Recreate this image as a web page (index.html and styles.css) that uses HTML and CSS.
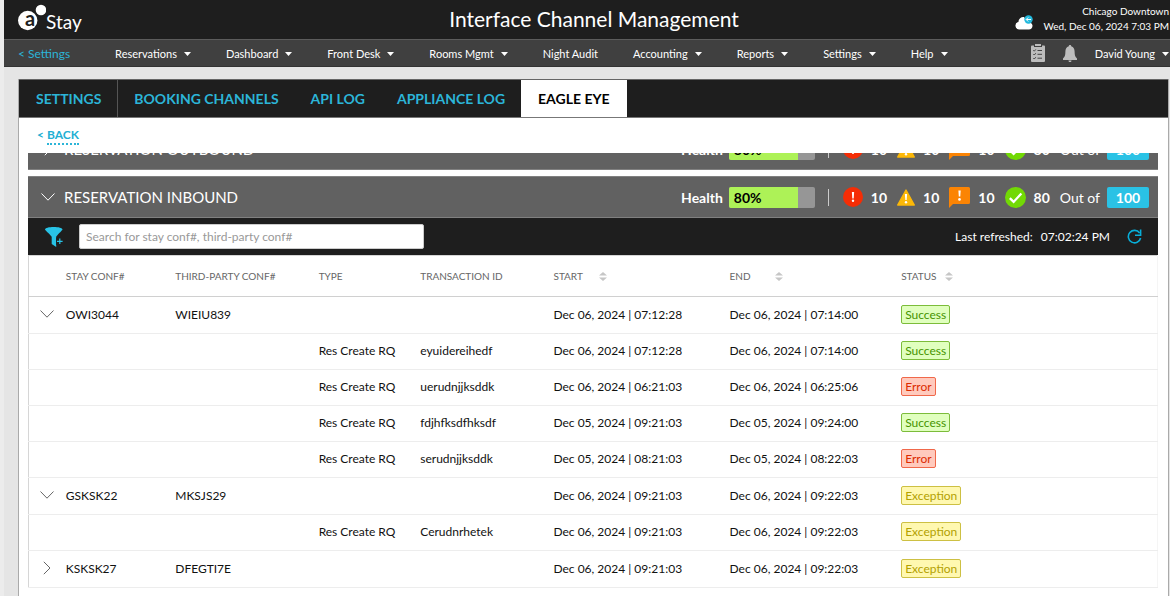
FILE: index.html
```html
<!DOCTYPE html>
<html lang="en">
<head>
  <meta charset="UTF-8">
  <meta name="viewport" content="width=device-width, initial-scale=1.0">
  <title>Interface Channel Management</title>
  <link rel="stylesheet" href="styles.css">
</head>
<body>
  <!-- Shared icons -->
  <svg class="sprite" aria-hidden="true">
    <symbol id="caret" viewBox="0 0 7 4"><path d="M0 0h7L3.500 4z" fill="currentColor"/></symbol>
    <symbol id="chevron-down" viewBox="0 0 14 8"><path d="M.5.500 7 7.200 13.500.500" fill="none" stroke="currentColor"/></symbol>
    <symbol id="chevron-right" viewBox="0 0 8 14"><path d="M.8.800 7 7 .8 13.200" fill="none" stroke="currentColor"/></symbol>
    <symbol id="sort" viewBox="0 0 8 9"><path d="M4 0 8 3.600H0zM0 5.400h8L4 9z" fill="#c6c6c6"/></symbol>
    <symbol id="error" viewBox="0 0 20 20"><circle cx="10" cy="10" r="10" fill="#f52d05"/><path d="M8.900 5h2.200l-.4 6.500H9.300z" fill="#fff"/><circle cx="10" cy="13.700" r="1.200" fill="#fff"/></symbol>
    <symbol id="warning" viewBox="0 0 18 17"><path d="M9 1 17.300 16H.7z" fill="#fcb808" stroke="#fcb808" stroke-width="1.400" stroke-linejoin="round"/><path d="M7.900 5h2.200l-.4 6H8.300z" fill="#fff"/><circle cx="9" cy="13.200" r="1.200" fill="#fff"/></symbol>
    <symbol id="exception" viewBox="0 0 21 21"><path d="M1.500 0h18A1.500 1.500 0 0 1 21 1.500v14a1.500 1.500 0 0 1-1.500 1.500H4l-4 4V1.500A1.500 1.500 0 0 1 1.500 0z" fill="#fb8404"/><path d="M9.400 3.400h2.300l-.4 6.200H9.800z" fill="#fff"/><circle cx="10.500" cy="12.400" r="1.300" fill="#fff"/></symbol>
    <symbol id="success" viewBox="0 0 20 20"><circle cx="10" cy="10" r="10" fill="#72d905"/><path d="m4.600 10.600 3.600 3.600 7.400-8" fill="none" stroke="#fff" stroke-width="2.200"/></symbol>
  </svg>

  <div class="app">
    <header class="header">
      <a class="logo" href="#" aria-label="Stay home">
        <svg class="logo-mark" width="28" height="28" viewBox="0 0 28 28">
          <circle cx="9.700" cy="16.500" r="9.700" fill="#fff"/>
          <circle cx="23" cy="6" r="6.600" fill="#1e1e1e"/>
          <text x="7" y="22" class="logo-letter">a</text>
          <circle cx="23" cy="6" r="5.300" fill="#fff"/>
        </svg>
        <span>Stay</span>
      </a>
      <h1 class="title">Interface Channel Management</h1>
      <div class="property">
        <svg width="18" height="15" viewBox="0 0 18 15" aria-hidden="true">
          <path d="M4 14.500a3.800 3.800 0 0 1-.6-7.500A5 5 0 0 1 9 2l4 6a3.200 3.200 0 0 1 4.500 2.500c.1 2.500-1.500 4-3.500 4z" fill="#fff"/>
          <circle cx="13.500" cy="4.500" r="4.200" fill="#22b9dd"/>
          <path d="M16 4.500h-4.600M13.200 2.500l-2 2 2 2" fill="none" stroke="#fff"/>
        </svg>
        <div class="property-text">
          <div>Chicago Downtown</div>
          <div>Wed, Dec 06, 2024 7:03 PM</div>
        </div>
      </div>
    </header>

    <nav class="nav">
      <a class="nav-back" href="#">&lt; Settings</a>
      <div class="nav-menu">
        <button class="nav-item">Reservations <svg class="caret"><use href="#caret"/></svg></button>
        <button class="nav-item">Dashboard <svg class="caret"><use href="#caret"/></svg></button>
        <button class="nav-item">Front Desk <svg class="caret"><use href="#caret"/></svg></button>
        <button class="nav-item">Rooms Mgmt <svg class="caret"><use href="#caret"/></svg></button>
        <button class="nav-item">Night Audit</button>
        <button class="nav-item">Accounting <svg class="caret"><use href="#caret"/></svg></button>
        <button class="nav-item">Reports <svg class="caret"><use href="#caret"/></svg></button>
        <button class="nav-item">Settings <svg class="caret"><use href="#caret"/></svg></button>
        <button class="nav-item">Help <svg class="caret"><use href="#caret"/></svg></button>
      </div>
      <div class="nav-user">
        <button aria-label="Tasks">
          <svg width="14" height="18" viewBox="0 0 14 18">
            <path d="M1 1.500h2V3h8V1.500h2a1 1 0 0 1 1 1V17a1 1 0 0 1-1 1H1a1 1 0 0 1-1-1V2.500a1 1 0 0 1 1-1zM4 0h6v2H4z" fill="#bdbdbd"/>
            <path d="m2.300 6.200 1 1 1.500-1.800M2.300 10l1 1 1.500-1.800M2.300 14l1 1 1.500-1.800M6.500 6.500H11M6.500 10.300H11M6.500 14.200H11" fill="none" stroke="#444"/>
          </svg>
        </button>
        <button aria-label="Notifications">
          <svg width="14" height="17" viewBox="0 0 14 17">
            <path d="M7 0c.8 0 1.200.5 1.200 1.300C10.600 2 11.600 4 11.600 6.500c0 4 .7 5.500 2.400 7V15H0v-1.500c1.700-1.500 2.400-3 2.400-7C2.400 4 3.400 2 5.800 1.300 5.800.500 6.200 0 7 0zM5.500 15.500h3C8.500 16.500 7.800 17 7 17s-1.500-.5-1.500-1.500z" fill="#bdbdbd"/>
          </svg>
        </button>
        <button class="nav-item">David Young <svg class="caret"><use href="#caret"/></svg></button>
      </div>
    </nav>

    <main class="panel">
      <div class="tabs">
        <a class="tab tab-first" href="#">SETTINGS</a>
        <a class="tab" href="#">BOOKING CHANNELS</a>
        <a class="tab" href="#">API LOG</a>
        <a class="tab" href="#">APPLIANCE LOG</a>
        <a class="tab active" href="#">EAGLE EYE</a>
      </div>

      <div class="back-row"><a class="back" href="#">&lt; <span>BACK</span></a></div>

      <div class="content">
        <!-- Scrolled partly under the back row -->
        <div class="scrolled">
          <section class="section-bar">
            <button class="toggle" aria-label="Expand reservation outbound"><svg width="8" height="14"><use href="#chevron-right"/></svg></button>
            <h2>RESERVATION OUTBOUND</h2>
            <div class="stats">
              <span class="health-label">Health</span>
              <div class="health"><div class="health-fill" style="width: 80%">80%</div></div>
              <span class="divider"></span>
              <span class="stat"><svg width="20" height="20"><use href="#error"/></svg>10</span>
              <span class="stat"><svg width="18" height="17"><use href="#warning"/></svg>10</span>
              <span class="stat"><svg width="21" height="21"><use href="#exception"/></svg>10</span>
              <span class="stat"><svg width="21" height="21"><use href="#success"/></svg>80</span>
              <span class="out-of">Out of</span>
              <span class="total">100</span>
            </div>
          </section>
        </div>

        <section class="section-bar">
          <button class="toggle" aria-label="Collapse reservation inbound"><svg width="14" height="8"><use href="#chevron-down"/></svg></button>
          <h2>RESERVATION INBOUND</h2>
          <div class="stats">
            <span class="health-label">Health</span>
            <div class="health"><div class="health-fill" style="width: 80%">80%</div></div>
            <span class="divider"></span>
            <span class="stat"><svg width="20" height="20"><use href="#error"/></svg>10</span>
            <span class="stat"><svg width="18" height="17"><use href="#warning"/></svg>10</span>
            <span class="stat"><svg width="21" height="21"><use href="#exception"/></svg>10</span>
            <span class="stat"><svg width="21" height="21"><use href="#success"/></svg>80</span>
            <span class="out-of">Out of</span>
            <span class="total">100</span>
          </div>
        </section>

        <div class="toolbar">
          <button class="filter" aria-label="Add filter">
            <svg width="18" height="20" viewBox="0 0 18 20">
              <path d="M0 2.500C0 .9 4 0 8.700 0s8.800.9 8.800 2.500c0 .8-6.300 6.200-6.300 7.500v10L6.700 17v-7C6.700 8.700 0 3.300 0 2.500z" fill="#28c3e6"/>
              <path d="M11.200 10.500H18V18h-6.800z" fill="#1e1e1e"/>
              <path d="M14.800 11.500v5.600M12 14.300h5.600" stroke="#28c3e6" stroke-width="1.200"/>
            </svg>
          </button>
          <input class="search" type="text" aria-label="Search reservations" placeholder="Search for stay conf#, third-party conf#">
          <div class="refreshed">
            <span>Last refreshed:</span>
            <span>07:02:24 PM</span>
            <button class="refresh" aria-label="Refresh">
              <svg width="15" height="15" viewBox="0 0 15 15">
                <path d="M12.600 4A6.200 6.200 0 1 0 13.600 9" fill="none" stroke="#08aed8" stroke-width="1.600"/>
                <path d="M13.600.500v5.700H8" fill="none" stroke="#08aed8" stroke-width="1.600"/>
              </svg>
            </button>
          </div>
        </div>

        <table class="log">
          <colgroup>
            <col class="col-toggle">
            <col class="col-stay">
            <col class="col-third">
            <col class="col-type">
            <col class="col-transaction">
            <col class="col-start">
            <col class="col-end">
            <col>
          </colgroup>
          <thead>
            <tr>
              <th></th>
              <th>STAY CONF#</th>
              <th>THIRD-PARTY CONF#</th>
              <th>TYPE</th>
              <th>TRANSACTION ID</th>
              <th><button class="sort">START <svg width="8" height="9"><use href="#sort"/></svg></button></th>
              <th><button class="sort sort-end">END <svg width="8" height="9"><use href="#sort"/></svg></button></th>
              <th><button class="sort sort-status">STATUS <svg width="8" height="9"><use href="#sort"/></svg></button></th>
            </tr>
          </thead>
          <tbody>
            <tr class="parent">
              <td><button class="toggle" aria-label="Collapse OWI3044"><svg width="14" height="8"><use href="#chevron-down"/></svg></button></td>
              <td>OWI3044</td><td>WIEIU839</td><td></td><td></td>
              <td>Dec 06, 2024 | 07:12:28</td><td>Dec 06, 2024 | 07:14:00</td>
              <td><span class="badge success">Success</span></td>
            </tr>
            <tr>
              <td></td><td></td><td></td><td>Res Create RQ</td><td>eyuidereihedf</td>
              <td>Dec 06, 2024 | 07:12:28</td><td>Dec 06, 2024 | 07:14:00</td>
              <td><span class="badge success">Success</span></td>
            </tr>
            <tr>
              <td></td><td></td><td></td><td>Res Create RQ</td><td>uerudnjjksddk</td>
              <td>Dec 06, 2024 | 06:21:03</td><td>Dec 06, 2024 | 06:25:06</td>
              <td><span class="badge error">Error</span></td>
            </tr>
            <tr>
              <td></td><td></td><td></td><td>Res Create RQ</td><td>fdjhfksdfhksdf</td>
              <td>Dec 05, 2024 | 09:21:03</td><td>Dec 05, 2024 | 09:24:00</td>
              <td><span class="badge success">Success</span></td>
            </tr>
            <tr>
              <td></td><td></td><td></td><td>Res Create RQ</td><td>serudnjjksddk</td>
              <td>Dec 05, 2024 | 08:21:03</td><td>Dec 05, 2024 | 08:22:03</td>
              <td><span class="badge error">Error</span></td>
            </tr>
            <tr class="parent">
              <td><button class="toggle" aria-label="Collapse GSKSK22"><svg width="14" height="8"><use href="#chevron-down"/></svg></button></td>
              <td>GSKSK22</td><td>MKSJS29</td><td></td><td></td>
              <td>Dec 06, 2024 | 09:21:03</td><td>Dec 06, 2024 | 09:22:03</td>
              <td><span class="badge exception">Exception</span></td>
            </tr>
            <tr>
              <td></td><td></td><td></td><td>Res Create RQ</td><td>Cerudnrhetek</td>
              <td>Dec 06, 2024 | 09:21:03</td><td>Dec 06, 2024 | 09:22:03</td>
              <td><span class="badge exception">Exception</span></td>
            </tr>
            <tr class="parent">
              <td><button class="toggle" aria-label="Expand KSKSK27"><svg width="8" height="14"><use href="#chevron-right"/></svg></button></td>
              <td>KSKSK27</td><td>DFEGTI7E</td><td></td><td></td>
              <td>Dec 06, 2024 | 09:21:03</td><td>Dec 06, 2024 | 09:22:03</td>
              <td><span class="badge exception">Exception</span></td>
            </tr>
          </tbody>
        </table>
      </div>
    </main>
  </div>
</body>
</html>
```

FILE: styles.css
```css
* {
  box-sizing: border-box;
}
body {
  margin: 0;
  font-family: Lato, "Liberation Sans", sans-serif;
  font-size: 12px;
  color: #111;
  background-color: #e5e5e5;
  overflow-x: hidden;
}
a {
  color: inherit;
  text-decoration: none;
}
button {
  padding: 0;
  border: 0;
  background: none;
  color: inherit;
  font: inherit;
  cursor: pointer;
}
svg {
  display: block;
  flex: none;
}
.sprite {
  display: none;
}
.app {
  min-height: 100vh;
  display: flex;
  flex-direction: column;
  border-left: 4px solid #ececec;
}

/* Header */
.header {
  display: grid;
  grid-template-columns: 1fr auto 1fr;
  align-items: center;
  height: 39px;
  padding: 0 0 2px 14px;
  background-color: #1e1e1e;
  color: #fff;
}
.logo {
  display: flex;
  align-items: center;
  font-size: 19px;
}
.logo span {
  padding-top: 6px;
}
.logo-mark {
  margin-top: -1px;
}
.logo-letter {
  font-size: 20px;
  font-weight: 700;
  fill: #1e1e1e;
}
.title {
  margin: 0;
  font-size: 21px;
  font-weight: 400;
}
.property {
  display: flex;
  align-items: center;
  justify-content: flex-end;
  gap: 10px;
  padding-right: 1px;
}
.property svg {
  margin-top: 8px;
}
.property-text {
  font-size: 10px;
  line-height: 15px;
  text-align: right;
}

/* Navigation */
.nav {
  display: flex;
  align-items: center;
  height: 28px;
  padding-left: 14px;
  border-top: 1px solid #5c5c5c;
  border-bottom: 1px solid #333;
  background-color: #404040;
  color: #fff;
  font-size: 11px;
}
.nav-back {
  margin-right: 45px;
  color: #2cb5d8;
  font-size: 12px;
}
.nav-menu {
  display: flex;
  gap: 35px;
}
.nav-item {
  display: flex;
  align-items: center;
  gap: 7px;
  white-space: nowrap;
}
.caret {
  width: 7px;
  height: 4px;
  margin-top: 2px;
}
.nav-user {
  display: flex;
  align-items: center;
  gap: 18px;
  margin-left: auto;
  padding-right: 1px;
}

/* Panel and tabs */
.panel {
  flex: 1;
  margin: 12px 1px 0 14px;
  border-left: 1px solid #aaa;
  border-right: 1px solid #aaa;
  background-color: #fff;
}
.tabs {
  display: flex;
  height: 39px;
  padding-left: 1px;
  border-top: 1px solid #666;
  border-bottom: 1px solid #777;
  background-color: #1e1e1e;
}
.tab {
  display: flex;
  align-items: center;
  padding: 0 16px;
  font-size: 14px;
  font-weight: 700;
  color: #2cb5d8;
}
.tab-first {
  border-right: 1px solid #555;
}
.tab.active {
  padding: 0 17px;
  background-color: #fff;
  color: #000;
}
.back-row {
  height: 35px;
  padding: 9px 18px 0;
}
.back {
  color: #22afd3;
  font-weight: 700;
}
.back span {
  display: inline-block;
  line-height: 16px;
  border-bottom: 2px dotted #2cb5d8;
}
.content {
  margin: 0 10px 0 9px;
}

/* Section bars */
.scrolled {
  display: flex;
  align-items: flex-end;
  height: 17px;
  margin-bottom: 6px;
  overflow: hidden;
}
.scrolled .section-bar {
  flex: 1;
}
.section-bar {
  display: flex;
  align-items: center;
  height: 42px;
  padding: 0 9px 0 10px;
  border: 1px solid #808080;
  border-width: 1px 0;
  background-color: #616161;
  color: #fff;
}
.toggle {
  display: flex;
  align-items: center;
  justify-content: center;
  width: 20px;
  height: 20px;
}
.section-bar h2 {
  margin: 0 auto 0 6px;
  font-size: 15px;
  font-weight: 400;
}
.stats {
  display: flex;
  align-items: center;
  font-size: 14px;
  font-weight: 700;
}
.health {
  width: 86px;
  margin: 0 13px 0 6px;
  border-radius: 2px;
  background-color: #969696;
  overflow: hidden;
}
.health-fill {
  padding-left: 5px;
  line-height: 21px;
  background-color: #adf257;
  color: #000;
}
.divider {
  width: 1px;
  height: 17px;
  margin-right: 14px;
  background-color: #ccc;
}
.stat {
  display: flex;
  align-items: center;
  gap: 8px;
  margin-right: 10px;
}
.out-of {
  margin-right: 7px;
  font-weight: 400;
}
.total {
  width: 42px;
  border-radius: 2px;
  background-color: #2ac2e5;
  line-height: 21px;
  text-align: center;
}

/* Search toolbar */
.toolbar {
  display: flex;
  align-items: center;
  height: 37px;
  padding: 0 16px 0 17px;
  background-color: #1e1e1e;
  color: #fff;
}
.search {
  width: 345px;
  height: 25px;
  margin-left: 16px;
  padding: 0 6px;
  border: 1px solid #ccc;
  border-radius: 2px;
  background-color: #fff;
  font: inherit;
}
.search::placeholder {
  color: #999;
}
.refreshed {
  display: flex;
  align-items: center;
  gap: 8px;
  margin-left: auto;
}
.refresh {
  margin-left: 9px;
}

/* Log table */
.log {
  width: 100%;
  table-layout: fixed;
  border-collapse: collapse;
  border: 1px solid #d6d6d6;
  border-right-color: #f5f5f5;
}
.col-toggle { width: 3.3%; }
.col-stay { width: 9.7%; }
.col-third { width: 12.7%; }
.col-type { width: 9%; }
.col-transaction { width: 11.8%; }
.col-start { width: 15.6%; }
.col-end { width: 15.2%; }
.log th {
  height: 41px;
  padding: 0;
  border-bottom: 1px solid #d0d0d0;
  color: #666;
  font-size: 10px;
  font-weight: 400;
  text-align: left;
}
.log td {
  height: 36px;
  padding: 0 0 2px;
  border-bottom: 1px solid #ededed;
  white-space: nowrap;
}
.log .parent td {
  height: 37px;
}
.log .toggle {
  margin-left: 8px;
  color: #666;
}
.sort {
  display: flex;
  align-items: center;
  gap: 16px;
}
.sort-end {
  gap: 24px;
}
.sort-status {
  gap: 8px;
}
.badge {
  display: inline-block;
  padding: 0 3px;
  border: 1px solid;
  border-radius: 2px;
  line-height: 17px;
}
.success {
  border-color: #7cbc3a;
  background-color: #e0ffbe;
  color: #479400;
}
.error {
  border-color: #f0684a;
  background-color: #ffcabd;
  color: #dc2b00;
}
.exception {
  border-color: #cdc043;
  background-color: #fff8b0;
  color: #b3a100;
}
```
